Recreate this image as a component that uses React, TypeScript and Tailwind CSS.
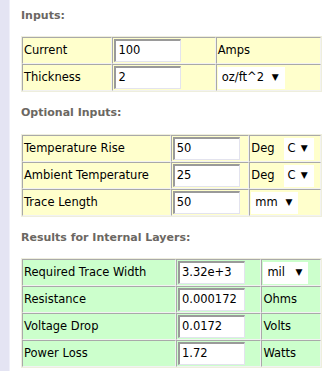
type Row = {
  label: string;
  value: string;
  unit?: string;
  select?: string;
  selectW?: string;
};

const inputs: Row[] = [
  { label: "Current", value: "100", unit: "Amps" },
  { label: "Thickness", value: "2", select: "oz/ft^2", selectW: "w-[67px]" },
];

const optional: Row[] = [
  { label: "Temperature Rise", value: "50", unit: "Deg", select: "C", selectW: "w-[30px]" },
  { label: "Ambient Temperature", value: "25", unit: "Deg", select: "C", selectW: "w-[30px]" },
  { label: "Trace Length", value: "50", select: "mm", selectW: "w-[47px]" },
];

const results: Row[] = [
  { label: "Required Trace Width", value: "3.32e+3", select: "mil", selectW: "w-[45px]" },
  { label: "Resistance", value: "0.000172", unit: "Ohms" },
  { label: "Voltage Drop", value: "0.0172", unit: "Volts" },
  { label: "Power Loss", value: "1.72", unit: "Watts" },
];

function FakeSelect({ text, w }: { text: string; w?: string }) {
  return (
    <span
      className={`inline-flex h-[22px] items-center justify-between bg-white pl-[4px] pr-[6px] align-middle ${w ?? ""}`}
    >
      <span>{text}</span>
      <span className="text-[9px]">▼</span>
    </span>
  );
}

function CalcTable({
  rows,
  widths,
  bg,
}: {
  rows: Row[];
  widths: [string, string, string];
  bg: string;
}) {
  const cell =
    "h-[27px] border border-t-[#a9a9a9] border-l-[#a9a9a9] border-b-[#f2f2f2] border-r-[#f2f2f2] p-[1px] align-middle whitespace-nowrap";
  return (
    <table
      className={`w-[301px] border-separate border-spacing-0 border border-[#eeeedd] ${bg}`}
    >
      <tbody>
        {rows.map((r) => (
          <tr key={r.label}>
            <td className={`${cell} ${widths[0]}`}>{r.label}</td>
            <td className={`${cell} ${widths[1]}`}>
              <div className="flex h-[23px] w-[67px] items-center border-t-2 border-l-2 border-b border-r border-t-[#9a9a9a] border-l-[#9a9a9a] border-b-[#e3e3ee] border-r-[#e3e3ee] bg-white pl-[2px]">
                {r.value}
              </div>
            </td>
            <td className={`${cell} ${widths[2]}`}>
              {r.unit && <span className="mr-[9px]">{r.unit}</span>}
              {r.select && <FakeSelect text={r.select} w={r.selectW} />}
            </td>
          </tr>
        ))}
      </tbody>
    </table>
  );
}

function Heading({ children }: { children: string }) {
  return (
    <div className="h-4 text-[11px] font-bold leading-4 text-[#6b6762]">
      {children}
    </div>
  );
}

export default function App() {
  return (
    <div className="flex min-h-screen bg-white font-['DejaVu_Sans',Verdana,sans-serif] text-[11.5px] text-black">
      <div className="w-[10px] shrink-0 border-r border-[#f0f0fa] bg-[#e4e4f3]" />
      <div className="pl-[11px] pt-[8px]">
        {/* Inputs */}
        <Heading>Inputs:</Heading>
        <div className="mt-[12px]">
          <CalcTable
            rows={inputs}
            widths={["w-[91px]", "w-[104px]", "w-[106px]"]}
            bg="bg-[#ffffcc]"
          />
        </div>

        {/* Optional Inputs */}
        <div className="mt-[13px]">
          <Heading>Optional Inputs:</Heading>
        </div>
        <div className="mt-[13px]">
          <CalcTable
            rows={optional}
            widths={["w-[150px]", "w-[79px]", "w-[72px]"]}
            bg="bg-[#ffffcc]"
          />
        </div>

        {/* Results */}
        <div className="mt-[13px]">
          <Heading>Results for Internal Layers:</Heading>
        </div>
        <div className="mt-[12px]">
          <CalcTable
            rows={results}
            widths={["w-[155px]", "w-[86px]", "w-[60px]"]}
            bg="bg-[#ccffcc]"
          />
        </div>
      </div>
    </div>
  );
}
